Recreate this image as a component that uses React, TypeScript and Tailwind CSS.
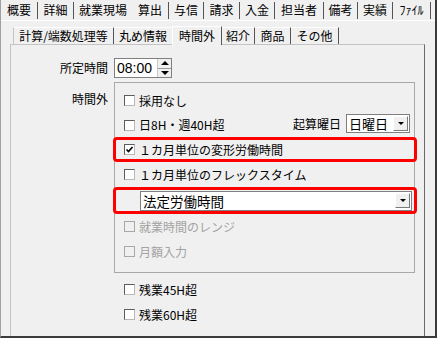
import React from 'react';

const jp = "font-['Noto_Sans_CJK_JP',sans-serif]";

const TOP_TABS = [
  { label: '概要', cls: 'w-[37px] border-r' },
  { label: '詳細', cls: 'w-[36px] border-r' },
  { label: '就業現場', cls: 'w-[58px]' },
  { label: '算出', cls: 'w-[37px] border-r' },
  { label: '与信', cls: 'w-[35px] border-r' },
  { label: '請求', cls: 'w-[36px] border-r' },
  { label: '入金', cls: 'w-[35px] border-r' },
  { label: '担当者', cls: 'w-[49px] border-r' },
  { label: '備考', cls: 'w-[34px] border-r' },
  { label: '実績', cls: 'w-[35px] border-r' },
  { label: 'ﾌｧｲﾙ', cls: 'w-[38px] border-r' },
];

function Triangle({ up }: { up?: boolean }) {
  return up ? (
    <span className="w-0 h-0 border-x-[4px] border-x-transparent border-b-[4px] border-b-black" />
  ) : (
    <span className="w-0 h-0 border-x-[4px] border-x-transparent border-t-[4px] border-t-black" />
  );
}

function DropButton() {
  return (
    <span className="w-[15px] h-[15px] flex items-center justify-center bg-[#f0f0f0] border border-t-white border-l-white border-r-[#7a7a7a] border-b-[#7a7a7a]">
      <span className="w-0 h-0 border-x-[3px] border-x-transparent border-t-[3px] border-t-black" />
    </span>
  );
}

function Check({ checked, disabled }: { checked?: boolean; disabled?: boolean }) {
  return (
    <span
      className={`w-[11px] h-[11px] shrink-0 flex items-center justify-center border ${
        disabled
          ? 'bg-[#f0f0f0] border-[#a8a8a8]'
          : 'bg-white border-t-[#5c5c5c] border-l-[#5c5c5c] border-r-[#b8b8b8] border-b-[#b8b8b8]'
      }`}
    >
      {checked && (
        <svg width="9" height="9" viewBox="0 0 9 9">
          <path d="M1.5 4.5 L3.5 6.5 L7.5 2" fill="none" stroke="#000" strokeWidth="1.6" />
        </svg>
      )}
    </span>
  );
}

function CheckRow({
  label,
  checked,
  disabled,
  className = 'pl-[9px]',
  children,
}: {
  label: string;
  checked?: boolean;
  disabled?: boolean;
  className?: string;
  children?: React.ReactNode;
}) {
  return (
    <div className={`flex items-center ${className}`}>
      <Check checked={checked} disabled={disabled} />
      <span className={`ml-[4px] text-[12px] leading-[16px] ${disabled ? 'text-[#a3a3a3]' : 'text-black'}`}>
        {label}
      </span>
      {children}
    </div>
  );
}

export default function App() {
  return (
    <div
      className={`w-[437px] h-[338px] flex flex-col bg-[#f0f0f0] border-l border-l-[#a0a0a0] border-r-2 border-r-[#3c3c3c] border-b-2 border-b-[#3c3c3c] text-black ${jp}`}
    >
      {/* top tabs */}
      <div className="h-[21px] shrink-0 flex items-center border-b border-b-white">
        {TOP_TABS.map((t) => (
          <div
            key={t.label}
            className={`h-[17px] flex items-center justify-center text-[12px] leading-[16px] border-[#555] ${t.cls}`}
          >
            {t.label}
          </div>
        ))}
      </div>

      {/* sub tabs */}
      <div className="h-[23px] shrink-0 flex items-end pl-[12px]">
        <div className="w-[101px] h-[17px] flex items-center justify-center text-[12px] border-t border-t-white border-l border-l-[#c4c4c4] border-r border-r-[#555]">
          計算/端数処理等
        </div>
        <div className="w-[58px] h-[17px] flex items-center justify-center text-[12px] border-t border-t-white">
          丸め情報
        </div>
        <div className="relative z-10 -mb-px w-[50px] h-[19px] flex items-center justify-center text-[12px] bg-[#f0f0f0] border-t border-t-white border-l border-l-white border-r border-r-[#555]">
          時間外
        </div>
        <div className="w-[33px] h-[17px] flex items-center justify-center text-[12px] border-t border-t-white border-r border-r-[#555]">
          紹介
        </div>
        <div className="w-[36px] h-[17px] flex items-center justify-center text-[12px] border-t border-t-white border-r border-r-[#555]">
          商品
        </div>
        <div className="w-[48px] h-[17px] flex items-center justify-center text-[12px] border-t border-t-white border-r border-r-[#555]">
          その他
        </div>
      </div>

      {/* panel */}
      <div className="flex-1 ml-[9px] mr-[10px] border-l border-t border-[#c4c4c4] border-r border-r-[#6a6a6a] pt-[13px] flex flex-col">
        <div className="flex items-center">
          <div className="w-[97px] text-right text-[12px] leading-[16px]">所定時間</div>
          <div className="ml-[6px] w-[58px] h-[20px] flex items-stretch bg-white border border-[#7f7f7f]">
            <span className="flex-1 pl-[2px] font-['Liberation_Sans',sans-serif] text-[14px] leading-[18px]">08:00</span>
            <span className="w-[14px] flex flex-col bg-[#f0f0f0] border-l border-l-[#c8c8c8]">
              <span className="flex-1 flex items-center justify-center border-b border-b-[#9a9a9a]">
                <Triangle up />
              </span>
              <span className="flex-1 flex items-center justify-center">
                <Triangle />
              </span>
            </span>
          </div>
        </div>

        <div className="flex mt-[4px]">
          <div className="w-[97px] pt-[9px] text-right text-[12px] leading-[16px]">時間外</div>
          <div className="ml-[6px] w-[301px] border border-[#a8a8a8] pt-[5px] pb-[8px] flex flex-col">
            <CheckRow label="採用なし" className="pl-[9px] h-[25px]" />
            <CheckRow label="日8H・週40H超" className="pl-[9px] h-[24px]">
              <span className="ml-auto text-[12px] leading-[16px] self-start mt-[3px]">起算曜日</span>
              <div className="ml-[5px] mr-[4px] self-start mt-[1px] w-[64px] h-[19px] flex items-center justify-between bg-white border border-[#7f7f7f] pr-[1px]">
                <span className="pl-[2px] text-[13px] leading-[16px]">日曜日</span>
                <DropButton />
              </div>
            </CheckRow>
            <div className="-ml-[2px] -mr-[3px] h-[25px] border-[3px] border-[#ff0000] rounded-[4px] flex items-center">
              <CheckRow label="１カ月単位の変形労働時間" checked className="pl-[8px]" />
            </div>
            <CheckRow label="１カ月単位のフレックスタイム" className="pl-[9px] h-[25px]" />
            <div className="-ml-[2px] -mr-[3px] h-[27px] border-[3px] border-[#ff0000] rounded-[4px] flex items-center">
              <div className="ml-[24px] mr-[2px] flex-1 h-[20px] flex items-center justify-between bg-white border border-[#7f7f7f] pr-[1px]">
                <span className="pl-[2px] text-[13.5px] leading-[16px]">法定労働時間</span>
                <DropButton />
              </div>
            </div>
            <CheckRow label="就業時間のレンジ" disabled className="pl-[9px] h-[25px]" />
            <CheckRow label="月額入力" disabled className="pl-[9px] h-[25px]" />
          </div>
        </div>

        <div className="ml-[103px] mt-[4px] flex flex-col">
          <CheckRow label="残業45H超" className="pl-[10px] h-[25px]" />
          <CheckRow label="残業60H超" className="pl-[10px] h-[25px]" />
        </div>
      </div>
    </div>
  );
}
